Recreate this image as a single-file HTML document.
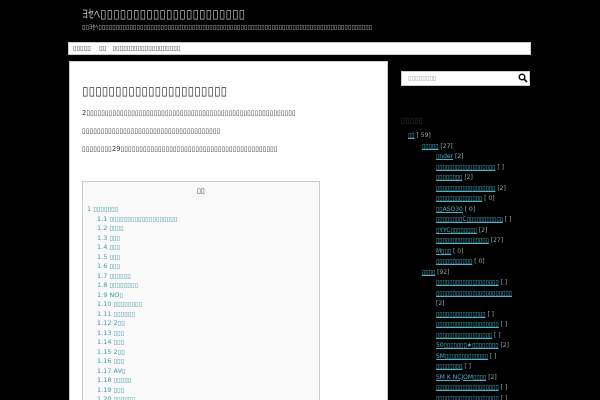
<!DOCTYPE html>
<html><head><meta charset="utf-8"><style>
*{margin:0;padding:0;box-sizing:border-box}
html,body{width:600px;height:400px;overflow:hidden}
body{background:#000;font-family:"DejaVu Sans","Liberation Sans",sans-serif;position:relative}
.a{position:absolute;white-space:nowrap;line-height:1}
.l{color:#4fb3c8;text-decoration:underline}
</style></head><body>
<div class="a" style="left:82px;top:8px;font-size:12px;color:#bbb">ﾖｾﾍ▯▯▯▯▯▯▯▯▯▯▯▯▯▯▯▯▯▯▯▯▯▯</div>
<div class="a" style="left:82px;top:25px;font-size:6.3px;color:#bbb">▯▯ﾖｾﾍ▯▯▯▯▯▯▯▯▯▯▯▯▯▯▯▯▯▯▯▯▯▯▯▯▯▯▯▯▯▯▯▯▯▯▯▯▯▯▯▯▯▯▯▯▯▯▯▯▯▯▯▯▯▯▯▯▯▯▯▯▯▯▯▯▯▯▯▯▯▯▯▯▯▯▯▯▯▯▯</div>
<div style="position:absolute;left:68px;top:42px;width:463px;height:13px;background:#fff;border:1px solid #ccc"></div>
<div class="a" style="left:73px;top:45px;font-size:6.5px;color:#333">▯▯▯▯▯&nbsp;&nbsp;&nbsp;&nbsp;▯▯&nbsp;&nbsp;&nbsp;▯▯▯▯▯▯▯▯▯▯▯▯▯▯▯▯▯▯▯</div>
<div style="position:absolute;left:69px;top:61px;width:319px;height:345px;background:#fff;border:1px solid #ccc"></div>
<div class="a" style="left:82px;top:85px;font-size:12px;color:#333">▯▯▯▯▯▯▯▯▯▯▯▯▯▯▯▯▯▯▯▯▯▯</div>
<div class="a" style="left:82px;top:110px;font-size:6.8px;color:#333">2▯▯▯▯▯▯▯▯▯▯▯▯▯▯▯▯▯▯▯▯▯▯▯▯▯▯▯▯▯▯▯▯▯▯▯▯▯▯▯▯▯▯▯▯▯▯▯▯▯▯▯▯▯▯▯▯</div>
<div class="a" style="left:82px;top:128px;font-size:6.8px;color:#333">▯▯▯▯▯▯▯▯▯▯▯▯▯▯▯▯▯▯▯▯▯▯▯▯▯▯▯▯▯▯▯▯▯▯▯▯▯</div>
<div class="a" style="left:82px;top:146px;font-size:6.8px;color:#333">▯▯▯▯▯▯▯▯29▯▯▯▯▯▯▯▯▯▯▯▯▯▯▯▯▯▯▯▯▯▯▯▯▯▯▯▯▯▯▯▯▯▯▯▯▯▯▯▯▯▯</div>
<div style="position:absolute;left:82px;top:181px;width:238px;height:230px;background:#f9f9f9;border:1px solid #ccc"></div>
<div class="a" style="left:197px;top:188px;font-size:7px;color:#333">▯▯</div>
<div class="a" style="left:87px;top:205px;font-size:6.5px;line-height:9.5px;color:#49a">
1 ▯▯▯▯▯▯▯<br>
<div style="padding-left:10px">1.1 ▯▯▯▯▯▯▯▯▯▯▯▯▯▯▯▯▯▯▯<br>1.2 ▯▯▯▯<br>1.3 ▯▯▯<br>1.4 ▯▯▯<br>1.5 ▯▯▯<br>1.6 ▯▯▯<br>1.7 ▯▯▯▯▯▯<br>1.8 ▯▯▯▯▯▯▯▯<br>1.9 NO▯<br>1.10 ▯▯▯▯▯▯▯▯<br>1.11 ▯▯▯▯▯▯<br>1.12 2▯▯<br>1.13 ▯▯▯<br>1.14 ▯▯▯<br>1.15 2▯▯<br>1.16 ▯▯▯<br>1.17 AV▯<br>1.18 ▯▯▯▯▯<br>1.19 ▯▯▯<br>1.20 ▯▯▯▯▯▯</div>
</div>
<div style="position:absolute;left:401px;top:71px;width:129px;height:15px;background:#fff;border:1px solid #ccc"></div>
<div class="a" style="left:408px;top:75px;font-size:6.5px;color:#999">▯▯▯▯▯▯▯▯</div>
<svg style="position:absolute;left:518px;top:73px" width="10" height="10" viewBox="0 0 10 10"><circle cx="4" cy="4" r="2.8" fill="none" stroke="#111" stroke-width="1.5"/><line x1="6" y1="6" x2="9" y2="9" stroke="#111" stroke-width="1.8"/></svg>
<div class="a" style="left:401px;top:117px;font-size:8px;color:#333">▯▯▯▯▯</div>
<div class="a" style="left:408px;top:131px;font-size:6px;line-height:10.5px;color:#9aa">
<span class="l">▯▯</span> [ 59]<br>
<div style="padding-left:14px"><span class="l">▯▯▯▯▯</span> [27]
<div style="padding-left:14px">
<span class="l">▯nder</span> [2]<br>
<span class="l">▯▯▯▯▯▯▯▯▯▯▯▯▯▯▯▯▯▯</span> [ ]<br>
<span class="l">▯▯▯▯▯▯▯▯</span> [2]<br>
<span class="l">▯▯▯▯▯▯▯▯▯▯▯▯▯▯▯▯▯▯</span> [2]<br>
<span class="l">▯▯▯▯▯▯▯▯▯▯▯▯▯▯</span> [ 0]<br>
<span class="l">▯▯ASO30</span> [ 0]<br>
<span class="l">▯▯▯▯▯▯▯▯C▯▯▯▯▯▯▯▯▯▯▯</span> [ ]<br>
<span class="l">▯YYC▯▯▯▯▯▯▯▯</span> [2]<br>
<span class="l">▯▯▯▯▯▯▯▯▯▯▯▯▯▯▯▯</span> [27]<br>
<span class="l">M▯▯▯</span> [ 0]<br>
<span class="l">▯▯▯▯▯▯▯▯▯▯▯</span> [ 0]
</div>
<span class="l">▯▯▯▯</span> [92]
<div style="padding-left:14px">
<span class="l">▯▯▯▯▯▯▯▯▯▯▯▯▯▯▯▯▯▯▯</span> [ ]<br>
<span class="l">▯▯▯▯▯▯▯▯▯▯▯▯▯▯▯▯▯▯▯▯▯▯▯</span><br>[2]<br>
<span class="l">▯▯▯▯▯▯▯▯▯▯▯▯▯▯▯</span> [ ]<br>
<span class="l">▯▯▯▯▯▯▯▯▯▯▯▯▯▯▯▯▯▯▯</span> [ ]<br>
<span class="l">▯▯▯▯▯▯▯▯▯▯▯▯▯▯▯▯▯</span> [ ]<br>
<span class="l">50▯▯▯▯▯▯▯★▯▯▯▯▯▯▯▯</span> [2]<br>
<span class="l">SM▯▯▯▯▯▯▯▯▯▯▯▯▯</span> [ ]<br>
<span class="l">▯▯▯▯▯▯▯▯</span> [ ]<br>
<span class="l">SM K NCJOM▯▯▯▯</span> [2]<br>
<span class="l">▯▯▯▯▯▯▯▯▯▯▯▯▯▯▯▯▯▯▯</span> [ ]<br>
<span class="l">▯▯▯▯▯▯▯▯▯▯▯▯▯▯▯▯▯▯▯</span> [ ]<br>
<span class="l">▯▯▯▯▯▯▯▯▯▯▯▯▯▯▯▯▯▯</span>
</div></div></div>
</body></html>
